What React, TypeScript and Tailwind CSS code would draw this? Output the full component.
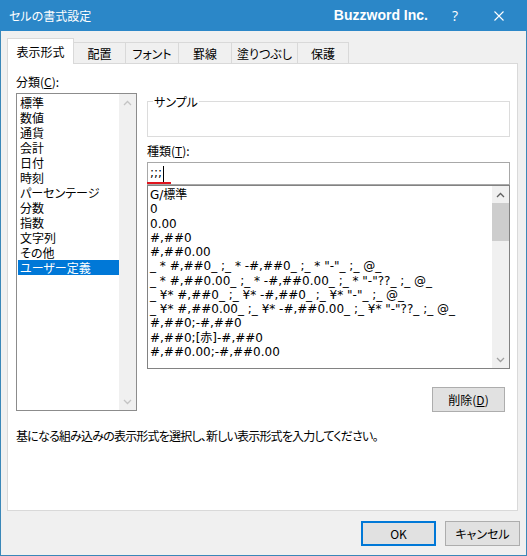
import React from 'react';

const jp = { fontFamily: '"Noto Sans CJK JP", "Noto Sans", sans-serif', fontFeatureSettings: '"palt"' };
const listFont = { fontFamily: '"DejaVu Sans", "Noto Sans CJK JP", sans-serif' };

const categories = [
  '標準',
  '数値',
  '通貨',
  '会計',
  '日付',
  '時刻',
  'パーセンテージ',
  '分数',
  '指数',
  '文字列',
  'その他',
  'ユーザー定義',
];

const formats = [
  'G/標準',
  '0',
  '0.00',
  '#,##0',
  '#,##0.00',
  '_ * #,##0_ ;_ * -#,##0_ ;_ * "-"_ ;_ @_',
  '_ * #,##0.00_ ;_ * -#,##0.00_ ;_ * "-"??_ ;_ @_',
  '_ ¥* #,##0_ ;_ ¥* -#,##0_ ;_ ¥* "-"_ ;_ @_',
  '_ ¥* #,##0.00_ ;_ ¥* -#,##0.00_ ;_ ¥* "-"??_ ;_ @_',
  '#,##0;-#,##0',
  '#,##0;[赤]-#,##0',
  '#,##0.00;-#,##0.00',
];

const tabs = [
  { label: '配置', w: 'w-[52px]' },
  { label: 'フォント', w: 'w-[53px]' },
  { label: '罫線', w: 'w-[53px]' },
  { label: '塗りつぶし', w: 'w-[66px]' },
  { label: '保護', w: 'w-[51px]' },
];

function Chevron({ up, color }: { up?: boolean; color: string }) {
  return (
    <svg width="9" height="6" viewBox="0 0 9 6">
      <polyline
        points={up ? '1,5 4.5,1.5 8,5' : '1,1 4.5,4.5 8,1'}
        fill="none"
        stroke={color}
        strokeWidth="1.3"
      />
    </svg>
  );
}

export default function App() {
  return (
    <div className="w-[527px] h-[556px] flex flex-col text-black text-[12px]" style={jp}>
      {/* title bar */}
      <div className="h-[31px] bg-[#2b87c8] flex items-center text-white shrink-0">
        <span className="pl-[9px] leading-[15px]">セルの書式設定</span>
        <span
          className="ml-auto font-bold text-[14px]"
          style={{ fontFamily: '"Liberation Sans", Arial, sans-serif' }}
        >
          Buzzword Inc.
        </span>
        <span className="ml-[24px] text-[14px]" style={{ fontFamily: '"Open Sans", sans-serif' }}>
          ?
        </span>
        <svg className="ml-[36px] mr-[23px]" width="10" height="10" viewBox="0 0 10 10">
          <path d="M0.5 0.5 L9.5 9.5 M9.5 0.5 L0.5 9.5" stroke="white" strokeWidth="1.1" />
        </svg>
      </div>

      <div className="flex-1 bg-[#f0f0f0] border-x border-b border-[#3a87b8] flex flex-col">
        {/* tabs */}
        <div className="flex items-end h-[25px] mt-[7px] ml-[6px]">
          <div className="relative z-10 w-[67px] h-[26px] -mb-px bg-white border border-b-0 border-[#d9d9d9] flex items-center justify-center leading-[15px] pb-[1px]">
            表示形式
          </div>
          {tabs.map((t) => (
            <div
              key={t.label}
              className={`${t.w} h-[21px] border-t border-r border-[#d9d9d9] bg-[#f0f0f0] flex items-center justify-center leading-[15px]`}
            >
              {t.label}
            </div>
          ))}
        </div>

        {/* tab page */}
        <div className="ml-[6px] w-[511px] h-[448px] bg-white border border-[#d9d9d9] flex flex-col">
          <div className="flex pl-[8px]">
            {/* category column */}
            <div className="w-[121px] pt-[10px] flex flex-col">
              <div className="leading-[15px]">
                分類(<span className="underline">C</span>):
              </div>
              <div className="mt-[4px] h-[318px] border border-[#8c8c8c] flex">
                <div className="flex-1 pt-[1px] pl-[1px]">
                  {categories.map((c, i) => (
                    <div
                      key={c}
                      className={`leading-[15px] h-[15px] px-[2px] ${i === categories.length - 1 ? 'bg-[#0078d7] text-white' : ''}`}
                    >
                      {c}
                    </div>
                  ))}
                </div>
                <div className="w-[17px] bg-[#f0f0f0] flex flex-col justify-between">
                  <div className="h-[17px] flex items-center justify-center">
                    <Chevron up color="#c4c4c4" />
                  </div>
                  <div className="h-[17px] flex items-center justify-center">
                    <Chevron color="#c4c4c4" />
                  </div>
                </div>
              </div>
            </div>

            {/* type column */}
            <div className="ml-[10px] w-[363px] pt-[37px] flex flex-col">
              <div className="relative h-[36px] border border-[#dcdcdc]">
                <span className="absolute -top-[8px] left-[5px] bg-white px-[1px] leading-[15px]">サンプル</span>
              </div>
              <div className="mt-[6px] leading-[15px]">
                種類(<span className="underline">T</span>):
              </div>
              <div className="relative mt-[4px] h-[23px] border border-[#a8a8a8] flex items-center pl-[2px]">
                <span className="leading-[15px]" style={listFont}>;;;</span>
                <span className="ml-[1px] w-px h-[16px] bg-black" />
                <div className="absolute -left-px top-[19px] w-[24px] h-[2px] bg-[#e0141e]" />
              </div>
              <div className="h-[184px] border border-[#828282] flex">
                <div className="flex-1 pt-[2px] pl-[2px] overflow-hidden text-[12px]" style={listFont}>
                  {formats.map((f) => (
                    <div key={f} className="leading-[14.25px] h-[14.25px] whitespace-pre">
                      {f}
                    </div>
                  ))}
                </div>
                <div className="w-[17px] bg-[#f0f0f0] flex flex-col">
                  <div className="h-[17px] flex items-center justify-center">
                    <Chevron up color="#606060" />
                  </div>
                  <div className="h-[38px] bg-[#cdcdcd]" />
                  <div className="flex-1" />
                  <div className="h-[17px] flex items-center justify-center">
                    <Chevron color="#a0a0a0" />
                  </div>
                </div>
              </div>
              <button className="self-end mr-[5px] mt-[18px] w-[73px] h-[25px] bg-[#e1e1e1] border border-[#adadad] leading-[15px]">
                削除(<span className="underline">D</span>)
              </button>
            </div>
          </div>

          <div className="mt-[16px] pl-[8px] leading-[15px] tracking-[-0.8px]">
            基になる組み込みの表示形式を選択し、新しい表示形式を入力してください。
          </div>
        </div>

        {/* dialog buttons */}
        <div className="mt-[10px] flex justify-end gap-[9px] pr-[6px]">
          <button className="w-[75px] h-[25px] bg-[#e1e1e1] border-2 border-[#0078d7] leading-[15px]">OK</button>
          <button className="w-[75px] h-[25px] bg-[#e1e1e1] border border-[#adadad] leading-[15px]">キャンセル</button>
        </div>
      </div>
    </div>
  );
}
